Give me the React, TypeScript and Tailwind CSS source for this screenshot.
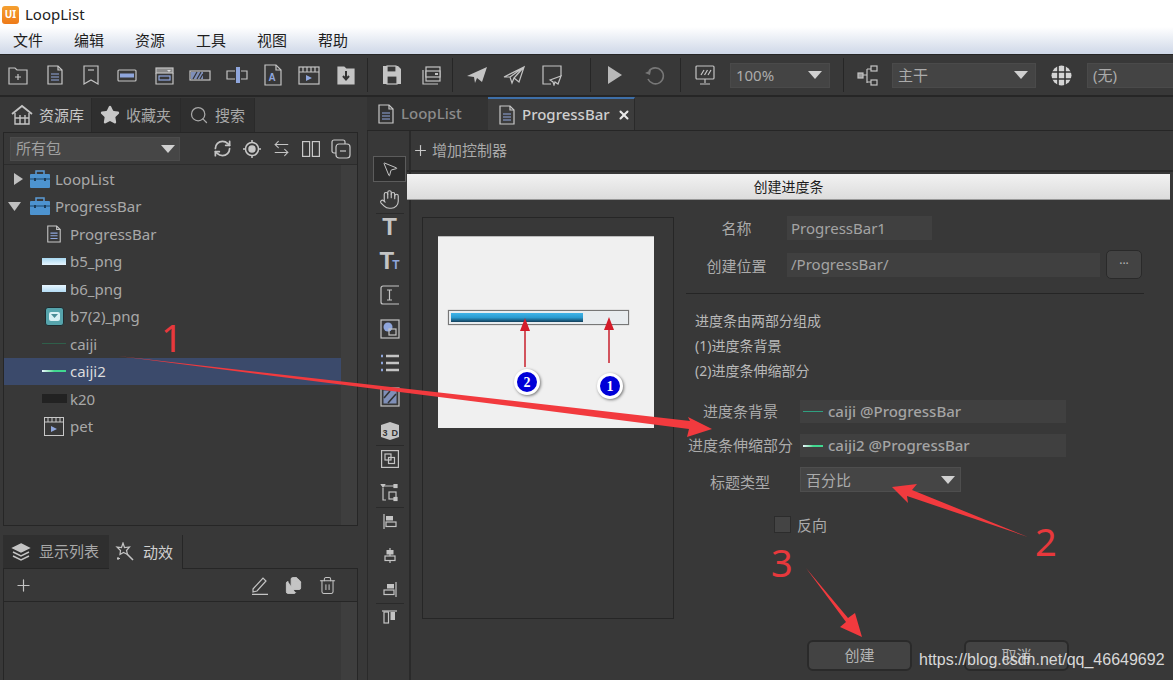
import React from 'react';
import { ArrowLeftRight, Files, Hand, MousePointer2, Plus, RefreshCw, Search, Star, Trash2, X } from 'lucide-react';

const blue = '#8fa6dc';

const Ic: React.FC<{ w?: number; h?: number; children: React.ReactNode }> = ({ w = 22, h = 22, children }) => (
  <svg width={w} height={h} viewBox={`0 0 ${w} ${h}`} fill="none" stroke="#c4c4c4" strokeWidth="1.2" className="shrink-0">
    {children}
  </svg>
);

const DocIcon = ({ w = 18, h = 20 }: { w?: number; h?: number }) => (
  <svg width={w} height={h} viewBox="0 0 18 20" fill="none" stroke="#c8c8c8" strokeWidth="1.2" className="shrink-0">
    <path d="M2 1h10l4 4v14H2z" />
    <path d="M12 1v4h4" />
    <path d="M5 9h8M5 12h8M5 15h8" stroke={blue} />
  </svg>
);

const toolbarA = [
  <Ic key="a"><path d="M2 4h6l2 2h10v14H2z" /><path d="M11 10v6M8 13h6" /></Ic>,
  <DocIcon key="b" />,
  <Ic key="c"><path d="M4 2h14v18l-7-4-7 4z" /><path d="M8 6h6" /></Ic>,
  <Ic key="d"><rect x="2" y="6" width="18" height="11" rx="1" /><rect x="4" y="9.5" width="14" height="4" fill={blue} stroke="none" /></Ic>,
  <Ic key="e"><rect x="3" y="4" width="17" height="5" fill="#8a8a8a" /><path d="M3 9v11h17V9" /><rect x="6" y="12" width="11" height="4" stroke={blue} /><path d="M14 6h4l-2 2z" fill="#ddd" stroke="none" /></Ic>,
  <Ic key="f"><rect x="1" y="7" width="20" height="9" /><rect x="2" y="8" width="12" height="7" fill="#7f8fb8" stroke="none" /><path d="M4 15l4-7M8 15l4-7M11 15l3-5" stroke="#333" /></Ic>,
  <Ic key="g"><path d="M9 7H1v8h8M15 7h6v8h-6" /><rect x="10" y="3" width="4" height="16" fill={blue} stroke="none" /></Ic>,
  <Ic key="h"><path d="M3 1h11l5 5v15H3z" /><path d="M14 1v5h5" /><text x="6.5" y="17" fontSize="10" fontWeight="700" fill={blue} stroke="none" fontFamily="Liberation Sans">A</text></Ic>,
  <Ic key="i"><rect x="1" y="3" width="20" height="17" /><path d="M1 8h20M5 3v5M9 3v5M13 3v5M17 3v5" /><path d="M8 11v6l6-3z" fill={blue} stroke="none" /></Ic>,
  <Ic key="j"><path d="M3 3h6l2 2h8v15H3z" fill="#c4c4c4" /><path d="M11 7v8M8 12l3 3.500 3-3.500" stroke="#333" strokeWidth="2" /></Ic>,
];

const SaveIcon = () => (
  <Ic><path d="M2 2h15l3 3v15H2z" fill="#c4c4c4" stroke="none" /><rect x="6" y="2" width="9" height="6" fill="#383838" /><rect x="6" y="12" width="10" height="8" fill="#383838" /></Ic>
);
const SaveAllIcon = () => (
  <Ic><path d="M3 6v14h15" /><rect x="6" y="3" width="14" height="14" /><rect x="6" y="7" width="14" height="6" fill="#383838" /><rect x="15" y="9" width="3" height="2" fill="#c4c4c4" stroke="none" /></Ic>
);
const PlaneFilled = () => (
  <Ic><path d="M1 12L21 3l-5 15-5-4-2 5-1-6z" fill="#c4c4c4" stroke="none" /></Ic>
);
const PlaneOutline = () => (
  <Ic><path d="M1 13L21 3l-5 15-5-4-2 5-2-6zM21 3L7 13M21 3l-10 11" /></Ic>
);
const PlaneDoc = () => (
  <Ic><path d="M10 20H2V2h18v10" /><path d="M9 16l11-4-3 8-3-2-1 3-1-3z" /></Ic>
);
const PlayIcon = () => (
  <Ic w={16} h={20}><path d="M1 1l14 9-14 9z" fill="#b8b8b8" stroke="none" /></Ic>
);
const RedoIcon = () => (
  <Ic><path d="M5 7a8 8 0 1 1-1 8" stroke="#777" strokeWidth="1.6" /><path d="M1 9l5 2 1-5z" fill="#777" stroke="none" /></Ic>
);
const MonitorIcon = () => (
  <Ic><rect x="2" y="2" width="18" height="13" rx="1" /><path d="M11 15v4M6 20h10M7 11l3-5M10.500 11l3-5M14 11l3-5" /></Ic>
);
const BranchIcon = () => (
  <Ic w={24} h={24}><rect x="2" y="10" width="5" height="5" fill="#999" /><path d="M7 12h4M11 6v14M11 6h4M11 19h4" /><rect x="15" y="3" width="6" height="5" /><rect x="15" y="17" width="6" height="5" /></Ic>
);
const GlobeIcon = () => (
  <svg width="21" height="21" viewBox="0 0 21 21" className="shrink-0">
    <circle cx="10.500" cy="10.500" r="10" fill="#d4d4d4" />
    <path d="M0 7h21M0 14h21M7 0v21M14 0v21" stroke="#333" strokeWidth="1.600" />
  </svg>
);

const Sep = ({ className = '' }: { className?: string }) => <div className={`w-px h-[34px] bg-[#262626] shrink-0 ${className}`} />;

const Arrow = () => (
  <svg width="14" height="8" viewBox="0 0 14 8" className="shrink-0"><path d="M0 0h14L7 8z" fill="#d0d0d0" /></svg>
);

const ToolSelect = ({ label, className }: { label: string; className: string }) => (
  <div className={`h-[25px] bg-[#444444] border border-[#4a4a4a] flex items-center justify-between pl-[5px] pr-[7px] text-[15px] text-[#ababab] shrink-0 ${className}`}>
    <span>{label}</span>
    {label !== '(无)' && <Arrow />}
  </div>
);

const IconCell = ({ w = 'w-[36.400px]', children }: { w?: string; children: React.ReactNode }) => (
  <div className={`${w} flex items-center justify-center shrink-0`}>{children}</div>
);

const Toolbar = () => (
  <div className="h-[43px] bg-[#383838] border-t border-b-2 border-[#262626] flex items-center">
    {toolbarA.map(i => <IconCell key={i.key}>{i}</IconCell>)}
    <Sep className="ml-[3px]" />
    <IconCell w="w-[49px]"><SaveIcon /></IconCell>
    <IconCell w="w-[28px]"><SaveAllIcon /></IconCell>
    <Sep className="ml-[7px]" />
    <IconCell w="w-[49px]"><PlaneFilled /></IconCell>
    <IconCell w="w-[24px]"><PlaneOutline /></IconCell>
    <IconCell w="w-[52px]"><PlaneDoc /></IconCell>
    <Sep className="ml-[12px]" />
    <IconCell w="w-[48px]"><PlayIcon /></IconCell>
    <IconCell w="w-[32px]"><RedoIcon /></IconCell>
    <Sep className="ml-[9px]" />
    <IconCell w="w-[49px]"><MonitorIcon /></IconCell>
    <ToolSelect label="100%" className="w-[100px]" />
    <Sep className="ml-[13px]" />
    <IconCell w="w-[48px]"><BranchIcon /></IconCell>
    <ToolSelect label="主干" className="w-[144px]" />
    <IconCell w="w-[51px]"><GlobeIcon /></IconCell>
    <ToolSelect label="(无)" className="w-[100px]" />
  </div>
);

const HomeIcon = () => (
  <Ic><path d="M1 10L11 2l10 8" strokeWidth="1.800" /><path d="M4 9v11h14V9M4 14h14M9 11v9M14 11v9" strokeWidth="1.400" /></Ic>
);

const LeftTab = ({ icon, label, active, className = '' }: { icon: React.ReactNode; label: string; active?: boolean; className?: string }) => (
  <div className={`h-[34px] flex items-center gap-[6px] pl-[8px] text-[15px] border-r border-[#2a2a2a] ${active ? 'bg-[#383838] text-[#c8c8c8]' : 'bg-[#2f2f2f] text-[#a8a8a8]'} ${className}`}>
    {icon}
    <span>{label}</span>
  </div>
);

const Toolbox = () => (
  <svg width="20" height="18" viewBox="0 0 20 18" className="shrink-0">
    <path d="M6 4V1h8v3" fill="none" stroke="#5b9bd5" strokeWidth="1.500" />
    <rect y="4" width="20" height="14" rx="1" fill="#4d93cf" />
    <path d="M0 9h20" stroke="#2c5f8a" strokeWidth="1.500" />
    <rect x="4" y="8" width="2" height="3" fill="#1d3c57" />
    <rect x="14" y="8" width="2" height="3" fill="#1d3c57" />
  </svg>
);

const Thumb = ({ kind }: { kind: string }) => {
  if (kind === 'doc') return <div className="w-[24px] flex justify-center"><DocIcon w={16} h={20} /></div>;
  if (kind === 'bar') return <div className="w-[24px] h-[7px] bg-gradient-to-b from-[#a8d8f0] to-[#e8f6ff]" />;
  if (kind === 'bar2') return <div className="w-[24px] h-[7px] bg-gradient-to-b from-[#e8f6ff] to-[#b4dcf4]" />;
  if (kind === 'btn')
    return (
      <div className="w-[24px] flex justify-center">
        <div className="w-[19px] h-[19px] rounded-[3px] bg-[#56a4ac] border border-[#1e2c30] flex items-center justify-center">
          <div className="w-[11px] h-[9px] rounded-[2px] bg-[#d8f0f4] flex items-center justify-center">
            <svg width="7" height="4" viewBox="0 0 7 4"><path d="M0 0h7L3.500 4z" fill="#4a8c96" /></svg>
          </div>
        </div>
      </div>
    );
  if (kind === 'line') return <div className="w-[24px] h-px bg-[#2f5f4a]" />;
  if (kind === 'line2') return <div className="w-[24px] h-[2px] bg-gradient-to-r from-[#e8f6ff] via-[#40d890] to-[#40d890]" />;
  if (kind === 'dark') return <div className="w-[25px] h-[9px] bg-[#222222]" />;
  return (
    <div className="w-[24px] flex justify-center">
      <svg width="20" height="19" viewBox="0 0 20 19" fill="none" stroke="#c8c8c8" strokeWidth="1"><rect x="0.500" y="0.500" width="19" height="18" /><path d="M0 5h20M4 0v5M8 0v5M12 0v5M16 0v5" /><path d="M7 9v6l6-3z" fill={blue} stroke="none" /></svg>
    </div>
  );
};

const treeItems = [
  { label: 'ProgressBar', kind: 'doc' },
  { label: 'b5_png', kind: 'bar' },
  { label: 'b6_png', kind: 'bar2' },
  { label: 'b7(2)_png', kind: 'btn' },
  { label: 'caiji', kind: 'line' },
  { label: 'caiji2', kind: 'line2', selected: true },
  { label: 'k20', kind: 'dark' },
  { label: 'pet', kind: 'movie' },
];

const Tree = () => (
  <div className="flex-1 flex flex-col">
    <div className="h-[27.500px] flex items-center pl-[10px]">
      <svg width="10" height="12" viewBox="0 0 10 12" className="mr-[6px]"><path d="M0 0l9 6-9 6z" fill="#c0c0c0" /></svg>
      <Toolbox />
      <span className="ml-[5px]">LoopList</span>
    </div>
    <div className="h-[27.500px] flex items-center pl-[4px]">
      <svg width="13" height="9" viewBox="0 0 13 9" className="mr-[9px]"><path d="M0 0h13L6.500 9z" fill="#c0c0c0" /></svg>
      <Toolbox />
      <span className="ml-[5px]">ProgressBar</span>
    </div>
    {treeItems.map(t => (
      <div
        key={t.label + t.kind}
        className={`h-[27.500px] flex items-center pl-[37px] gap-[3px] ${t.selected ? 'bg-[#3b4a6b] text-[#dcdcdc]' : ''}`}
      >
        <div className="w-[26px] flex justify-center"><Thumb kind={t.kind} /></div>
        <span>{t.label}</span>
      </div>
    ))}
  </div>
);

const LeftPanel = () => (
  <div className="w-[360px] shrink-0 flex flex-col pl-[3px] pr-[2px] text-[#a8a8a8] text-[15px]">
    <div className="flex h-[34px] mt-[1px]">
      <LeftTab active className="w-[89px]" label="资源库" icon={<HomeIcon />} />
      <LeftTab className="w-[89px]" label="收藏夹" icon={<Star size={20} fill="#c8c8c8" stroke="#c8c8c8" />} />
      <LeftTab className="w-[74px]" label="搜索" icon={<Search size={20} strokeWidth={1.500} />} />
    </div>
    <div className="h-[394px] border border-[#262626] flex flex-col">
      <div className="h-[32px] flex items-center pl-[6px] border-b border-[#2c2c2c] shrink-0">
        <div className="w-[170px] h-[24px] bg-[#464646] border border-[#4c4c4c] flex items-center justify-between px-[5px] pr-[4px] text-[#a0a0a0]">
          <span>所有包</span>
          <Arrow />
        </div>
        <div className="flex items-center ml-[33px] gap-[11px] text-[#c4c4c4]">
          <RefreshCw size={19} strokeWidth={2.200} />
          <svg width="18" height="18" viewBox="0 0 18 18" fill="none" stroke="#c8c8c8" strokeWidth="1.500"><circle cx="9" cy="9" r="6.500" /><circle cx="9" cy="9" r="3" fill="#c8c8c8" /><path d="M9 0v2.500M9 15.500V18M0 9h2.500M15.500 9H18" /></svg>
          <ArrowLeftRight size={19} strokeWidth={1.300} />
          <svg width="18" height="16" viewBox="0 0 18 16" fill="none" stroke="#c8c8c8" strokeWidth="1.200"><rect x="0.600" y="0.600" width="7" height="14.800" /><rect x="10.400" y="0.600" width="7" height="14.800" /></svg>
          <svg width="20" height="20" viewBox="0 0 20 20" fill="none" stroke="#c8c8c8" strokeWidth="1.200"><rect x="1" y="1" width="13" height="13" rx="2" /><rect x="5" y="5" width="14" height="14" rx="3" fill="#383838" /><path d="M9 12h6" /></svg>
        </div>
      </div>
      <div className="flex-1 flex">
        <Tree />
        <div className="w-[16px] bg-[#3e3e3e]" />
      </div>
    </div>
    <div className="flex h-[34px] mt-[9px] items-end">
      <div className="w-[106px] h-[34px] bg-[#2f2f2f] flex items-center pl-[8px] gap-[8px] border-b border-[#262626]">
        <svg width="20" height="20" viewBox="0 0 20 20" fill="none" stroke="#c4c4c4" strokeWidth="1.500"><path d="M10 2l8 4-8 4-8-4z" fill="#c4c4c4" /><path d="M2 10l8 4 8-4M2 14l8 4 8-4" /></svg>
        <span>显示列表</span>
      </div>
      <div className="w-[74px] h-[34px] flex items-center pl-[6px] gap-[8px] text-[#d0d0d0] border-r border-[#262626]">
        <svg width="20" height="20" viewBox="0 0 20 20" fill="none" stroke="#c4c4c4" strokeWidth="1.200"><path d="M8 1l1.500 4.500 5-.5-3 3.500 1 4-4-2-3.500 2 .5-4L2 5l4.500.5z" /><path d="M12 12l6 6" strokeWidth="1.600" /><path d="M3 15v3M2 16.500h3" /></svg>
        <span>动效</span>
      </div>
      <div className="flex-1 h-[34px] border-b border-[#262626]" />
    </div>
    <div className="flex-1 border-l border-r border-[#262626] flex flex-col">
      <div className="h-[33px] border-b border-[#262626] flex items-center pl-[10px] text-[#c4c4c4] shrink-0">
        <Plus size={19} strokeWidth={1.500} />
        <div className="ml-auto mr-[20px] flex items-center gap-[15px]">
          <svg width="18" height="20" viewBox="0 0 18 20" fill="none" stroke="#c4c4c4" strokeWidth="1.200"><path d="M2 14L12 3l3 3L6 16l-4 1z" /><path d="M1 19.500h16" strokeWidth="1.500" /></svg>
          <Files size={19} fill="#c4c4c4" strokeWidth={1.200} />
          <Trash2 size={19} strokeWidth={1.300} />
        </div>
      </div>
      <div className="flex-1 flex justify-end"><div className="w-[16px] bg-[#3e3e3e]" /></div>
    </div>
  </div>
);

const toolIcons: (React.ReactNode | 'sep')[] = [
  <Hand size={21} strokeWidth={1.300} color="#c8c8c8" />,
  'sep',
  <span className="text-[24px] leading-none font-bold text-[#c4c4c4] font-['Liberation_Sans']">T</span>,
  <span className="text-[24px] leading-none font-bold text-[#c4c4c4] font-['Liberation_Sans']">T<span className="text-[12px] text-[#8fa6dc] ml-[-2px]">T</span></span>,
  <Ic w={20} h={20}><path d="M19 1H3a2 2 0 0 0-2 2v14a2 2 0 0 0 2 2h16M7 5h5M7 15h5M9.500 5v10" /></Ic>,
  <Ic w={20} h={20}><rect x="1" y="1" width="18" height="18" /><circle cx="8" cy="8" r="4.500" fill={blue} stroke="none" /><rect x="9" y="10" width="7" height="6" /></Ic>,
  <Ic w={20} h={18}><path d="M6 2h13M6 9h13M6 16h13" strokeWidth="2.400" /><path d="M1 2h2M1 9h2M1 16h2" stroke={blue} strokeWidth="2.400" /></Ic>,
  <Ic w={20} h={20}><rect x="1" y="1" width="18" height="18" /><rect x="3.500" y="3.500" width="13" height="13" fill="#7f8fb8" stroke="none" /><path d="M4 11l6-7M8 16l8-9" stroke="#333" strokeWidth="1.600" /></Ic>,
  <Ic w={20} h={20}><path d="M10 1l9 3v12l-9 3-9-3V4z" fill="#c4c4c4" stroke="none" /><text x="2.500" y="15" fontSize="9" fontWeight="700" fill="#333" stroke="none" fontFamily="Liberation Sans">3</text><text x="11.500" y="15" fontSize="9" fontWeight="700" fill="#333" stroke="none" fontFamily="Liberation Sans">D</text></Ic>,
  'sep',
  <Ic w={18} h={18}><rect x="0.600" y="0.600" width="16.800" height="16.800" /><rect x="4" y="4" width="6" height="6" /><rect x="7.500" y="7.500" width="6" height="6" /></Ic>,
  <Ic w={19} h={18}><path d="M3 2h12M3 4v12h3" /><path d="M1 0l4 0-2 3z" fill="#c4c4c4" /><rect x="9" y="8" width="7" height="7" /><rect x="14" y="0.500" width="3" height="3" fill="#c4c4c4" /><rect x="14" y="13.500" width="3" height="3" fill="#c4c4c4" /></Ic>,
  'sep',
  <Ic w={14} h={15}><path d="M1 0v15" /><rect x="3" y="2" width="7" height="4.500" fill="#c4c4c4" stroke="none" /><rect x="3" y="8" width="10" height="4.500" /></Ic>,
  <Ic w={14} h={15}><path d="M7 0v15" /><rect x="3.500" y="2" width="7" height="4.500" fill="#c4c4c4" stroke="none" /><rect x="2" y="8" width="10" height="4.500" fill="#383838" /></Ic>,
  <Ic w={14} h={15}><path d="M13 0v15" /><rect x="4" y="2" width="7" height="4.500" fill="#c4c4c4" stroke="none" /><rect x="1" y="8" width="10" height="4.500" /></Ic>,
  'sep',
  <Ic w={15} h={15}><path d="M0 1h15" /><rect x="2" y="2" width="4.500" height="11" /><rect x="8.500" y="2" width="4.500" height="8" fill="#c4c4c4" stroke="none" /></Ic>,
];

const ToolStrip = () => (
  <div className="w-[44px] shrink-0 border-l border-r-2 border-[#2a2a2a] flex flex-col items-center pt-[1px] pl-[2px]">
    <div className="w-[33px] h-[26px] mt-[24px] bg-[#2c2c2c] border border-[#5c5c5c] flex items-center justify-center">
      <MousePointer2 size={18} strokeWidth={1.300} color="#c8c8c8" />
    </div>
    {toolIcons.map((ic, n) =>
      ic === 'sep' ? (
        <div key={n} className="w-[28px] h-px bg-[#2a2a2a] my-[2px] -mt-[3px] -mb-[4px]" />
      ) : (
        <div key={n} className="h-[34px] flex items-center justify-center shrink-0">{ic}</div>
      )
    )}
  </div>
);

const Preview = () => (
  <div className="w-[252px] h-[402px] shrink-0 ml-[15px] mt-[17px] border border-[#262626] pt-[18px] pl-[15px]">
    <div className="relative w-[216px] h-[192px] bg-[#f0f0f0] border-t border-[#bbb] pt-[73px] pl-[10px]">
      <div className="w-[181px] h-[15px] bg-[#e8ecef] border border-[#777] p-[2px] shadow-[0_0_1px_#999]">
        <div className="w-[132px] h-full bg-gradient-to-b from-[#3fb4e8] via-[#2a9bd0] to-[#12405c]" />
      </div>
      <Badge n="2" className="left-[76px] top-[132px]" />
      <Badge n="1" className="left-[159px] top-[136px]" />
      <svg className="absolute left-0 top-0" width="216" height="192" fill="#d41c2a">
        <path d="M87 130V88M171 126V86" stroke="#c8202c" strokeWidth="1.500" />
        <path d="M87 81l5 13h-10zM171 80l5 13h-10z" />
      </svg>
    </div>
  </div>
);

const Badge = ({ n, className }: { n: string; className: string }) => (
  <div className={`absolute w-[26px] h-[26px] rounded-full bg-[#0000d8] border-[3px] border-white shadow-[1px_1px_3px_#777] flex items-center justify-center text-white text-[14px] font-bold font-['Liberation_Serif'] ${className}`}>
    {n}
  </div>
);

const SlotRow = ({ label, value, line, labelClass, className }: { label: string; value: string; line: string; labelClass: string; className: string }) => (
  <div className={`flex items-center ${className}`}>
    <div className={`text-[15px] ${labelClass}`}>{label}</div>
    <div className="ml-auto w-[266px] h-[23px] bg-[#404040] flex items-center pl-[3px] text-[15px] font-medium text-[#a4a4a4]">
      <div className={`w-[20px] shrink-0 mr-[5px] ${line}`} />
      <span>{value}</span>
    </div>
  </div>
);

const DialogBtn = ({ label, className = '' }: { label: string; className?: string }) => (
  <div className={`w-[105px] h-[31px] rounded-[6px] bg-[#434343] border-2 border-[#2a2a2a] flex items-center justify-center text-[15px] text-[#b4b4b4] ${className}`}>
    {label}
  </div>
);

const Dialog = () => (
  <div className="flex-1 flex flex-col pr-[3px] text-[#ababab] mt-[2px]">
    <div className="h-[26px] bg-gradient-to-b from-[#f2f2f2] to-[#dcdcdc] border-b border-[#999] flex items-center justify-center text-[14px] text-[#1c1c1c] shrink-0">
      创建进度条
    </div>
    <div className="flex-1 flex">
      <Preview />
      <div className="w-[476px] ml-[12px] shrink-0 relative">
        <div className="flex items-center mt-[16px] h-[24px]">
          <div className="w-[101px] text-center pl-[0px] text-[15px]">名称</div>
          <div className="w-[145px] h-[24px] bg-[#404040] flex items-center pl-[4px] text-[15px] text-[#a4a4a4]">ProgressBar1</div>
        </div>
        <div className="flex items-center mt-[10px] h-[29px]">
          <div className="w-[101px] text-center text-[15px] pt-[3px]">创建位置</div>
          <div className="w-[313px] h-[24px] bg-[#404040] flex items-center pl-[4px] text-[15px] text-[#a4a4a4]">/ProgressBar/</div>
          <div className="ml-[6px] w-[36px] h-[29px] rounded-[5px] bg-[#434343] border border-[#2a2a2a] text-center text-[12px] text-[#b4b4b4]">...</div>
        </div>
        <div className="h-px bg-[#252525] mt-[14px] w-[458px]" />
        <div className="pl-[9px] pt-[14px] text-[14px] leading-[25px] text-[#b8b8b8]">
          <div>进度条由两部分组成</div>
          <div>(1)进度条背景</div>
          <div>(2)进度条伸缩部分</div>
        </div>
        <SlotRow className="w-[380px] mt-[17px] pl-[17px]" labelClass="" label="进度条背景" value="caiji @ProgressBar" line="h-px bg-[#2f9f80]" />
        <SlotRow className="w-[380px] mt-[11px] pl-[2px]" labelClass="" label="进度条伸缩部分" value="caiji2 @ProgressBar" line="h-[2px] bg-gradient-to-r from-[#e8f6ff] via-[#40d890] to-[#40d890]" />
        <div className="flex items-center mt-[9px] pl-[24px]">
          <div className="text-[15px] pt-[5px]">标题类型</div>
          <div className="ml-[30px] w-[161px] h-[25px] bg-[#454545] border border-[#4e4e4e] flex items-center justify-between pl-[5px] pr-[5px] text-[15px]">
            <span>百分比</span>
            <Arrow />
          </div>
        </div>
        <div className="flex items-center mt-[20px] pl-[88px] text-[15px]">
          <div className="w-[17px] h-[17px] bg-[#444444] border border-[#2c2c2c]" />
          <span className="ml-[6px]">反向</span>
        </div>
        <div className="flex mt-[104px] pl-[121px] gap-[52px]">
          <DialogBtn label="创建" />
          <DialogBtn label="取消" />
        </div>
      </div>
    </div>
  </div>
);

const Annotations = () => (
  <>
    <svg className="absolute left-0 top-0 pointer-events-none" width="1173" height="680" fill="#f23a3e">
      <polygon points="118,356 690,421 688,417 712,429 687,437 689,429" />
      <polygon points="892,487 917,484 912,490 1028,537 907,496 908,503" />
      <polygon points="806,568 848,618 855,613 862,637 840,627 846,622" />
    </svg>
    <span className="absolute left-[161px] top-[312px] text-[38px] leading-[50px] text-[#e8383c] font-['Noto_Sans']">1</span>
    <span className="absolute left-[1035px] top-[516px] text-[38px] leading-[50px] text-[#e8383c] font-['Noto_Sans']">2</span>
    <span className="absolute left-[771px] top-[537px] text-[38px] leading-[50px] text-[#e8383c] font-['Noto_Sans']">3</span>
    <span className="absolute left-[919px] top-[650px] text-[16px] leading-[20px] text-[#d8d8d8] font-['Liberation_Sans']">https://blog.csdn.net/qq_46649692</span>
  </>
);

export default function App() {
  return (
    <div className="relative w-[1173px] h-[680px] overflow-hidden bg-[#383838] flex flex-col font-['Noto_Sans','Noto_Sans_CJK_SC',sans-serif]">
      <div className="h-[27px] bg-white flex items-center pl-[2px] pt-[2px] text-[15px] text-[#222] shrink-0">
        <div className="w-[17px] h-[18px] rounded-[3px] bg-gradient-to-b from-[#f5a030] to-[#ee7a18] text-white text-[10px] font-bold flex items-center justify-center">UI</div>
        <span className="ml-[6px]">LoopList</span>
      </div>
      <div className="h-[27px] bg-gradient-to-b from-white to-[#cfd8e8] flex items-center pl-[13px] gap-[31px] text-[15px] text-[#1e1e1e] shrink-0">
        {['文件', '编辑', '资源', '工具', '视图', '帮助'].map(m => <span key={m}>{m}</span>)}
      </div>
      <Toolbar />
      <div className="flex-1 flex min-h-0">
        <LeftPanel />
        <div className="flex-1 flex flex-col pl-[7px] min-w-0">
          <div className="h-[34px] flex text-[15px] border-b border-[#262626] shrink-0">
            <div className="w-[121px] bg-[#333333] flex items-center pl-[10px] gap-[6px] text-[#8c8c8c] font-medium">
              <DocIcon /> LoopList
            </div>
            <div className="w-[147px] bg-[#3c3c3c] border-t-2 border-[#3e6fa8] flex items-center pl-[10px] gap-[6px] text-[#cfcfcf] font-medium border-r border-r-[#2a2a2a]">
              <DocIcon /> ProgressBar
              <X size={14} strokeWidth={3.500} color="#e8e8e8" className="ml-[1px]" />
            </div>
          </div>
          <div className="flex-1 flex min-h-0">
            <ToolStrip />
            <div className="flex-1 flex flex-col min-w-0 -ml-[4px]">
              <div className="h-[41px] flex items-center pl-[5px] text-[15px] text-[#aaaaaa] gap-[3px] shrink-0 border-b-2 border-[#2a2a2a]">
                <Plus size={17} strokeWidth={1.600} color="#c8c8c8" />
                <span>增加控制器</span>
              </div>
              <Dialog />
            </div>
          </div>
        </div>
      </div>
      <Annotations />
    </div>
  );
}
